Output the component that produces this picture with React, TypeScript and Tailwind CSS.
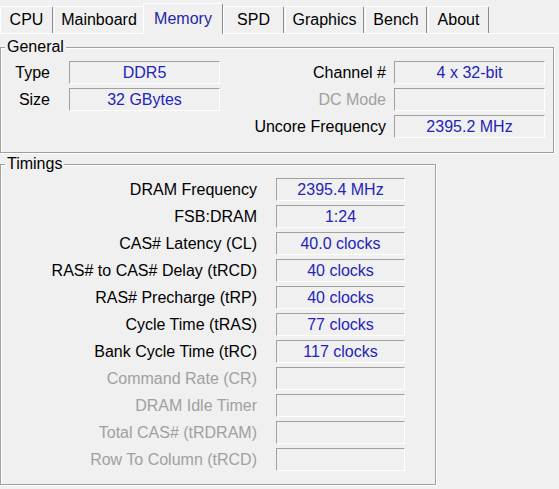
import React from "react";

const tabs = [
  { name: "CPU", cls: "w-[53px]" },
  { name: "Mainboard", cls: "ml-[1px] w-[90px]" },
  { name: "Memory", cls: "ml-[-1px] w-[80px]", active: true },
  { name: "SPD", cls: "w-[61px]" },
  { name: "Graphics", cls: "ml-[1px] w-[79px]" },
  { name: "Bench", cls: "ml-[1px] w-[62px]" },
  { name: "About", cls: "ml-[1px] w-[61px]" },
];

function Box({ value, w }: { value?: string; w: string }) {
  return (
    <div
      className={`${w} h-[23px] shrink-0 border border-t-[#a0a0a0] border-l-[#a0a0a0] border-r-white border-b-white flex items-center justify-center text-[#2424b8]`}
    >
      {value ?? ""}
    </div>
  );
}

function Legend({ text }: { text: string }) {
  return (
    <div className="absolute left-[4px] top-[-9px] px-[2px] bg-[#f0f0f0] leading-[16px] text-black">
      {text}
    </div>
  );
}

const timings: { label: string; value?: string; disabled?: boolean }[] = [
  { label: "DRAM Frequency", value: "2395.4 MHz" },
  { label: "FSB:DRAM", value: "1:24" },
  { label: "CAS# Latency (CL)", value: "40.0 clocks" },
  { label: "RAS# to CAS# Delay (tRCD)", value: "40 clocks" },
  { label: "RAS# Precharge (tRP)", value: "40 clocks" },
  { label: "Cycle Time (tRAS)", value: "77 clocks" },
  { label: "Bank Cycle Time (tRC)", value: "117 clocks" },
  { label: "Command Rate (CR)", disabled: true },
  { label: "DRAM Idle Timer", disabled: true },
  { label: "Total CAS# (tRDRAM)", disabled: true },
  { label: "Row To Column (tRCD)", disabled: true },
];

export default function App() {
  return (
    <div className="w-[559px] h-[489px] overflow-hidden bg-[#f0f0f0] font-['Liberation_Sans',Arial,sans-serif] text-[16px] leading-[16px] text-black">
      {/* Tab bar */}
      <div className="flex items-end h-[34px] border-b border-white">
        {tabs.map((t) =>
          t.active ? (
            <div
              key={t.name}
              className={`${t.cls} relative z-10 mb-[-1px] h-[31px] shrink-0 bg-[#f0f0f0] border-l border-t border-r border-l-white border-t-white border-r-[#8c8c8c] rounded-t-[2px] flex items-center justify-center text-[#2626a6]`}
            >
              {t.name}
            </div>
          ) : (
            <div
              key={t.name}
              className={`${t.cls} h-[27px] shrink-0 bg-[#f0f0f0] border-l border-t border-r border-l-white border-t-white border-r-[#8c8c8c] rounded-t-[2px] flex items-center justify-center`}
            >
              {t.name}
            </div>
          )
        )}
      </div>

      {/* General */}
      <div className="relative mt-[13px] w-[554px] h-[106px] border border-[#a0a0a0] shadow-[inset_1px_1px_0_#fff,1px_1px_0_#fff]">
        <Legend text="General" />
        <div className="flex flex-col gap-[4px] pt-[13px]">
          <div className="flex items-center">
            <div className="w-[49px] text-right">Type</div>
            <div className="w-[19px]" />
            <Box w="w-[151px]" value="DDR5" />
            <div className="w-[166px] text-right">Channel #</div>
            <div className="w-[8px]" />
            <Box w="w-[151px]" value="4 x 32-bit" />
          </div>
          <div className="flex items-center">
            <div className="w-[49px] text-right">Size</div>
            <div className="w-[19px]" />
            <Box w="w-[151px]" value="32 GBytes" />
            <div className="w-[166px] text-right text-[#a0a0a0]">DC Mode</div>
            <div className="w-[8px]" />
            <Box w="w-[151px]" />
          </div>
          <div className="flex items-center">
            <div className="w-[219px]" />
            <div className="w-[166px] text-right">Uncore Frequency</div>
            <div className="w-[8px]" />
            <Box w="w-[151px]" value="2395.2 MHz" />
          </div>
        </div>
      </div>

      {/* Timings */}
      <div className="relative mt-[11px] w-[436px] h-[321px] border border-[#a0a0a0] shadow-[inset_1px_1px_0_#fff,1px_1px_0_#fff]">
        <Legend text="Timings" />
        <div className="flex flex-col gap-[4px] pt-[13px]">
          {timings.map((r) => (
            <div key={r.label} className="flex items-center">
              <div
                className={`w-[256px] text-right whitespace-nowrap ${
                  r.disabled ? "text-[#a0a0a0]" : "text-black"
                }`}
              >
                {r.label}
              </div>
              <div className="w-[19px]" />
              <Box w="w-[129px]" value={r.value} />
            </div>
          ))}
        </div>
      </div>
    </div>
  );
}
